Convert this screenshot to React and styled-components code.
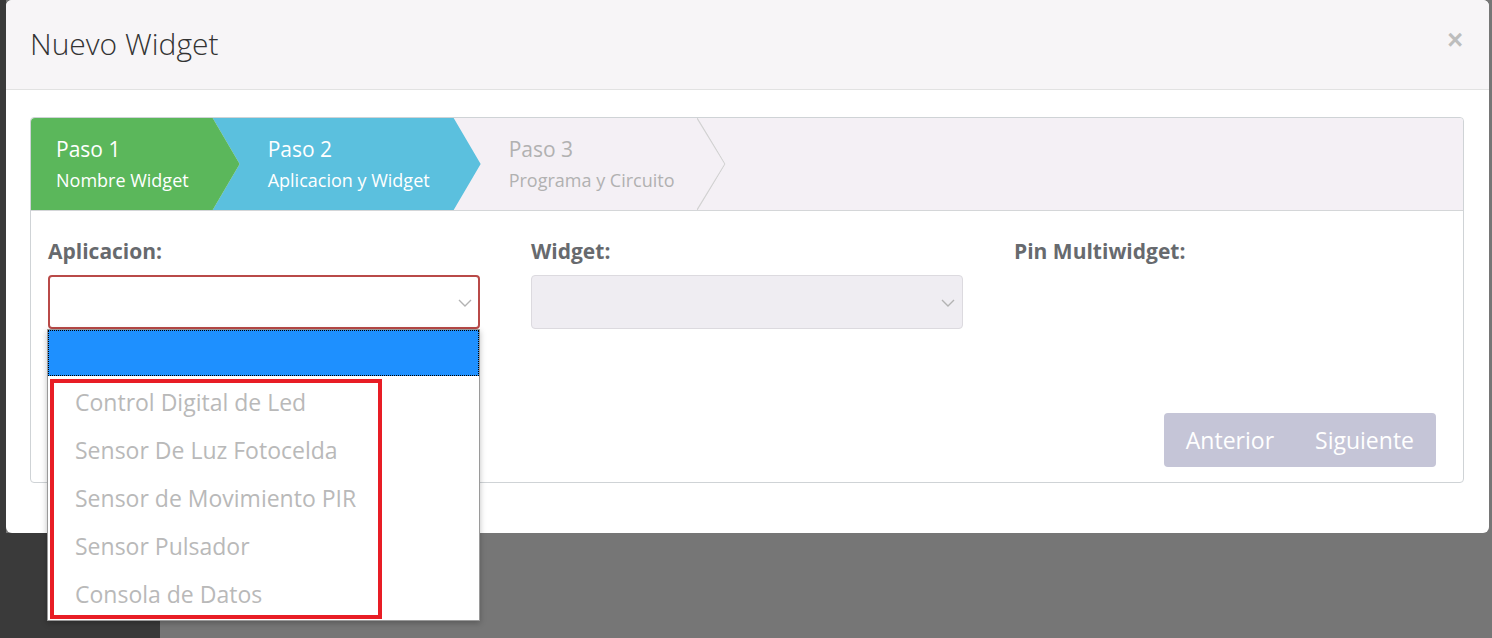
import React from "react";
import styled, { createGlobalStyle } from "styled-components";

const Global = createGlobalStyle`
  html, body { margin: 0; padding: 0; }
  body {
    width: 1492px;
    height: 638px;
    overflow: hidden;
    font-family: "Open Sans", "Liberation Sans", sans-serif;
    background:
      linear-gradient(#3a3a3a, #3a3a3a) 0 533px / 160px 105px no-repeat,
      linear-gradient(#3a3a3a, #3a3a3a) 0 0 / 6px 100% no-repeat,
      #767676;
  }
`;

const Page = styled.div`
  display: flex;
  padding-left: 6px;
`;

const Modal = styled.div`
  width: 1483px;
  height: 533px;
  background: #fff;
  border-radius: 6px;
  display: flex;
  flex-direction: column;
`;

const Header = styled.div`
  height: 89px;
  flex: none;
  display: flex;
  align-items: center;
  justify-content: space-between;
  padding: 0 26px 0 24px;
  background: #f7f5f7;
  border-bottom: 1px solid #e2e2e2;
  border-radius: 6px 6px 0 0;
`;

const Title = styled.h4`
  margin: 0;
  font-weight: 300;
  font-size: 30px;
  color: #333;
  padding-bottom: 2px;
`;

const Close = styled.span`
  font-family: "Liberation Sans", Arial, sans-serif;
  font-weight: 700;
  font-size: 27px;
  color: #bdbdbd;
  line-height: 1;
  margin-top: -8px;
`;

const Body = styled.div`
  padding: 27px 25px 50px 24px;
`;

const Wizard = styled.div`
  border: 1px solid #cfd3d6;
  border-radius: 4px;
  height: 364px;
  display: flex;
  flex-direction: column;
`;

const Steps = styled.div`
  height: 92px;
  flex: none;
  display: flex;
  background: #f4f0f5;
  border-bottom: 1px solid #d4d6d8;
  border-radius: 4px 4px 0 0;
  overflow: hidden;
`;

const Step = styled.div`
  position: relative;
  display: flex;
  flex-direction: column;
  justify-content: center;
  padding: 0 51px 0 ${(p) => (p.$first ? 25 : 55)}px;
  margin-left: ${(p) => (p.$first ? 0 : -27)}px;
  z-index: ${(p) => p.$z};
  color: ${(p) => (p.$pending ? "#b1b1b1" : "#fff")};
  background: ${(p) => p.$bg};
  white-space: nowrap;
  clip-path: ${(p) =>
    p.$first
      ? "polygon(0 0, calc(100% - 27px) 0, 100% 50%, calc(100% - 27px) 100%, 0 100%)"
      : "polygon(0 0, calc(100% - 27px) 0, 100% 50%, calc(100% - 27px) 100%, 0 100%, 27px 50%)"};
`;

const StepTitle = styled.div`
  font-size: 21px;
  line-height: 26px;
  margin-top: -1px;
`;

const StepSub = styled.div`
  font-size: 18px;
  line-height: 22px;
  margin-top: 7px;
`;

const ChevronLine = styled.svg`
  position: absolute;
  right: 0;
  top: 0;
  width: 29px;
  height: 92px;
`;

const Content = styled.div`
  flex: 1;
  display: flex;
  flex-direction: column;
  padding: 26px 27px 15px 17px;
`;

const Fields = styled.div`
  display: grid;
  grid-template-columns: repeat(3, 432px);
  column-gap: 51px;
`;

const Field = styled.div`
  position: relative;
  display: flex;
  flex-direction: column;
`;

const Label = styled.label`
  font-weight: 700;
  font-size: 21px;
  line-height: 28px;
  color: #676a6e;
  margin-bottom: 10px;
`;

const Select = styled.div`
  height: 54px;
  box-sizing: border-box;
  border-radius: 4px;
  border: ${(p) => (p.$error ? "2px solid #b94a48" : "1px solid #dcdadf")};
  background: ${(p) => (p.$disabled ? "#efedf2" : "#fff")};
  display: flex;
  align-items: center;
  justify-content: flex-end;
  padding-right: ${(p) => (p.$error ? 6 : 7)}px;
`;

const Caret = styled.svg`
  width: 14px;
  height: 8px;
  margin-top: 2px;
`;

const Dropdown = styled.div`
  position: absolute;
  left: -1px;
  top: 92px;
  width: 431px;
  background: #fff;
  border: 1px solid #9a9a9a;
  box-shadow: 0 2px 6px rgba(0, 0, 0, 0.25);
  z-index: 10;
  padding-bottom: 2px;
`;

const Option = styled.div`
  height: ${(p) => (p.$selected ? 46 : 48)}px;
  box-sizing: border-box;
  display: flex;
  align-items: center;
  padding-left: 27px;
  font-size: 23px;
  color: #b9b9b9;
  white-space: nowrap;
  background: ${(p) => (p.$selected ? "#1e90ff" : "#fff")};
  outline: ${(p) => (p.$selected ? "1px dotted #000" : "none")};
  outline-offset: -1px;
  margin-bottom: ${(p) => (p.$selected ? 2 : 0)}px;
`;

const Highlight = styled.div`
  position: absolute;
  left: 2px;
  top: 49px;
  width: 332px;
  height: 240px;
  box-sizing: border-box;
  border: 4px solid #e81d25;
  pointer-events: none;
`;

const Actions = styled.div`
  margin-top: auto;
  display: flex;
  justify-content: flex-end;
`;

const ButtonGroup = styled.div`
  display: flex;
  background: #c5c5d7;
  border-radius: 4px;
  height: 54px;
`;

const Button = styled.button`
  border: none;
  background: transparent;
  color: #fff;
  font-family: "Open Sans", "Liberation Sans", sans-serif;
  font-size: 23px;
  padding: 0 ${(p) => p.$pr}px 0 ${(p) => p.$pl}px;
`;

const CaretIcon = () => (
  <Caret viewBox="0 0 14 8">
    <polyline points="1,1 7,7 13,1" fill="none" stroke="#b3b3b3" strokeWidth="1.4" />
  </Caret>
);

const options = [
  "Control Digital de Led",
  "Sensor De Luz Fotocelda",
  "Sensor de Movimiento PIR",
  "Sensor Pulsador",
  "Consola de Datos",
];

export default function App() {
  return (
    <>
      <Global />
      <Page>
        <Modal>
          <Header>
            <Title>Nuevo Widget</Title>
            <Close>×</Close>
          </Header>
          <Body>
            <Wizard>
              <Steps>
                <Step $first $z={3} $bg="#5bb75b">
                  <StepTitle>Paso 1</StepTitle>
                  <StepSub>Nombre Widget</StepSub>
                </Step>
                <Step $z={2} $bg="#5bc0de">
                  <StepTitle>Paso 2</StepTitle>
                  <StepSub>Aplicacion y Widget</StepSub>
                </Step>
                <Step $z={1} $pending $bg="transparent">
                  <StepTitle>Paso 3</StepTitle>
                  <StepSub>Programa y Circuito</StepSub>
                  <ChevronLine viewBox="0 0 29 92">
                    <polyline points="0,0 28,46 0,92" fill="none" stroke="#d2d2d2" strokeWidth="1.2" />
                  </ChevronLine>
                </Step>
              </Steps>
              <Content>
                <Fields>
                  <Field>
                    <Label>Aplicacion:</Label>
                    <Select $error>
                      <CaretIcon />
                    </Select>
                    <Dropdown>
                      <Option $selected />
                      {options.map((o) => (
                        <Option key={o}>{o}</Option>
                      ))}
                      <Highlight />
                    </Dropdown>
                  </Field>
                  <Field>
                    <Label>Widget:</Label>
                    <Select $disabled>
                      <CaretIcon />
                    </Select>
                  </Field>
                  <Field>
                    <Label>Pin Multiwidget:</Label>
                  </Field>
                </Fields>
                <Actions>
                  <ButtonGroup>
                    <Button $pl={22} $pr={20}>Anterior</Button>
                    <Button $pl={21} $pr={22}>Siguiente</Button>
                  </ButtonGroup>
                </Actions>
              </Content>
            </Wizard>
          </Body>
        </Modal>
      </Page>
    </>
  );
}
